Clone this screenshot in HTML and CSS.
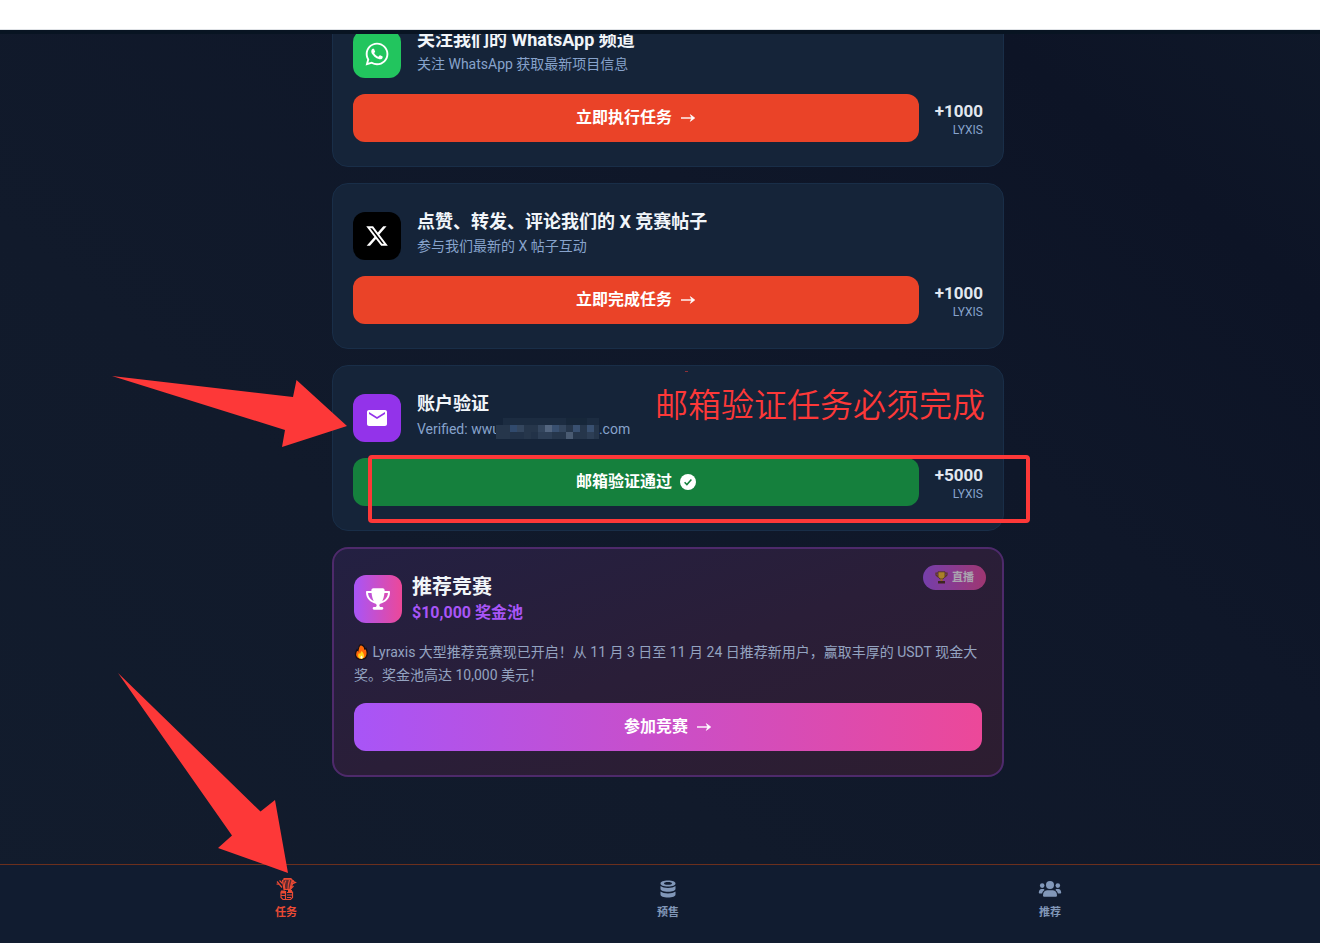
FILE: index.html
```html
<!DOCTYPE html>
<html lang="zh-CN">
<head>
<meta charset="utf-8">
<meta name="viewport" content="width=device-width, initial-scale=1">
<title>Lyraxis</title>
<link rel="stylesheet" href="styles.css">
</head>
<body>
<svg class="defs" aria-hidden="true">
  <symbol id="arrow" viewBox="0 0 14 10"><path d="M0 5h12" stroke="currentColor" stroke-width="1.4" fill="none"/><path d="M9.300 1.600 13.800 5 9.300 8.400 10.800 5z" fill="currentColor" stroke="currentColor" stroke-width=".6"/></symbol>
</svg>
<div class="topbar"></div>
<div class="strip"></div>
<main class="main">
  <div class="list">
    <section class="card">
      <div class="head">
        <span class="icon green"><svg width="26" height="26" viewBox="-32 0 512 512" fill="#fff"><path d="M380.900 97.100C339 55.100 283.200 32 223.900 32c-122.400 0-222 99.600-222 222 0 39.100 10.200 77.300 29.600 111L0 480l117.700-30.900c32.400 17.700 68.900 27 106.100 27h.1c122.300 0 224.100-99.600 224.100-222 0-59.300-25.200-115-67.100-157zm-157 341.600c-33.200 0-65.700-8.900-94-25.700l-6.700-4-69.800 18.300L72 359.200l-4.400-7c-18.500-29.400-28.200-63.300-28.200-98.200 0-101.700 82.800-184.500 184.600-184.500 49.300 0 95.600 19.200 130.400 54.100 34.800 34.900 56.200 81.200 56.100 130.500 0 101.800-84.900 184.600-186.600 184.600zm101.200-138.200c-5.500-2.800-32.800-16.200-37.900-18-5.100-1.900-8.800-2.800-12.500 2.800-3.700 5.600-14.300 18-17.600 21.800-3.200 3.700-6.500 4.200-12 1.400-32.600-16.300-54-29.100-75.500-66-5.700-9.800 5.700-9.100 16.300-30.300 1.800-3.700.9-6.900-.5-9.700-1.400-2.800-12.500-30.100-17.100-41.200-4.500-10.800-9.100-9.300-12.500-9.500-3.200-.2-6.900-.2-10.600-.2-3.700 0-9.700 1.400-14.800 6.900-5.100 5.600-19.400 19-19.400 46.300 0 27.300 19.900 53.700 22.600 57.400 2.800 3.700 39.100 59.700 94.800 83.800 35.200 15.200 49 16.500 66.600 13.900 10.700-1.600 32.800-13.400 37.400-26.400 4.600-13 4.600-24.100 3.200-26.400-1.300-2.500-5-3.900-10.500-6.600z"/></svg></span>
        <div><h2 class="title">关注我们的 WhatsApp 频道</h2><p class="sub">关注 WhatsApp 获取最新项目信息</p></div>
      </div>
      <div class="row">
        <button class="btn">立即执行任务<svg class="arrow"><use href="#arrow"/></svg></button>
        <div class="pts"><strong>+1000</strong><span>LYXIS</span></div>
      </div>
    </section>

    <section class="card">
      <div class="head">
        <span class="icon black"><svg width="24" height="24" viewBox="0 0 24 24" fill="#fff"><path d="M18.244 2.250h3.308l-7.227 8.260 8.502 11.240H16.170l-5.214-6.817L4.990 21.750H1.680l7.730-8.835L1.254 2.250H8.080l4.713 6.231zm-1.161 17.520h1.833L7.084 4.126H5.117z"/></svg></span>
        <div><h2 class="title">点赞、转发、评论我们的 X 竞赛帖子</h2><p class="sub">参与我们最新的 X 帖子互动</p></div>
      </div>
      <div class="row">
        <button class="btn">立即完成任务<svg class="arrow"><use href="#arrow"/></svg></button>
        <div class="pts"><strong>+1000</strong><span>LYXIS</span></div>
      </div>
    </section>

    <section class="card marked">
      <div class="head">
        <span class="icon purple"><svg width="24" height="24" viewBox="0 0 24 24" fill="#fff"><path d="M20 4H4c-1.100 0-2 .9-2 2v12c0 1.100.9 2 2 2h16c1.100 0 2-.9 2-2V6c0-1.100-.9-2-2-2zm0 4l-8 5-8-5V6l8 5 8-5v2z"/></svg></span>
        <div><h2 class="title">账户验证</h2>
          <p class="sub mail">Verified: wwu<svg class="mosaic" viewBox="0 0 103 21" shape-rendering="crispEdges">
            <path fill="#26364b" d="M0 7h103v14H0z"/><path fill="#1c2c41" d="M7 0h63v7H7zM91 0h12v7H91z"/><path fill="#17273a" d="M70 0h21v7H70z"/>
            <path fill="#314a6d" d="M14 7h7v7h-7z"/><path fill="#34465e" d="M21 7h7v7h-7zM42 7h7v7h-7zM63 7h7v7h-7z"/><path fill="#53657f" d="M49 7h7v7h-7z"/><path fill="#395070" d="M56 7h7v7h-7zM77 7h7v7h-7zM91 7h7v7h-7z"/>
            <path fill="#223248" d="M14 14h14v7H14zM35 14h7v7h-7z"/><path fill="#2d3e55" d="M42 14h14v7H42zM91 14h7v7h-7z"/><path fill="#4a5b72" d="M70 14h7v7h-7z"/></svg>.com</p></div>
      </div>
      <div class="row">
        <button class="btn done">邮箱验证通过<svg width="16" height="16" viewBox="0 0 16 16"><circle cx="8" cy="8" r="8" fill="#fff"/><path d="m4.600 8.300 2.300 2.300 4.500-5" fill="none" stroke="#15803d" stroke-width="1.500"/></svg></button>
        <div class="pts"><strong>+5000</strong><span>LYXIS</span></div>
      </div>
      <p class="note">邮箱验证任务必须完成</p>
      <div class="frame"></div>
      <svg class="pointer" viewBox="112 376 235 71"><path d="m112 376 181 21 3.500-17L347 426l-65 21 3-17z" fill="#fd3838"/></svg>
    </section>

    <section class="card contest">
      <span class="badge"><svg width="13" height="13" viewBox="0 0 13 13"><path d="M3 .8h7v5L8 8H5L3 5.800z" fill="#ffc31f" stroke="#4b2a12" stroke-width=".7"/><path d="M3 2H1v2l2 2M10 2h2v2l-2 2" fill="none" stroke="#7a4a12" stroke-width="1.200"/><path d="M5.500 8h2v2h-2z" fill="#e79a10"/><path d="M3 10h7v2.500H3z" fill="#4b2a12"/></svg>直播</span>
      <div class="head">
        <span class="icon fade"><svg width="24" height="22" viewBox="0 0 576 512" fill="#fff"><path d="M400 0H176c-26.500 0-48.100 21.800-47.100 48.200.2 5.300.4 10.600.7 15.800H24C10.700 64 0 74.700 0 88c0 92.600 33.500 157 78.500 200.700 44.300 43.100 98.300 64.800 138.100 75.800 23.400 6.500 39.400 26 39.400 45.600 0 20.900-17 37.900-37.900 37.900H192c-17.700 0-32 14.300-32 32s14.300 32 32 32h192c17.700 0 32-14.300 32-32s-14.300-32-32-32h-26.100c-20.900 0-37.900-17-37.900-37.900 0-19.600 15.900-39.200 39.400-45.600 39.900-11 93.900-32.700 138.200-75.800C542.500 245 576 180.600 576 88c0-13.300-10.700-24-24-24H446.400c.3-5.200.5-10.400.7-15.800C448.100 21.800 426.500 0 400 0zM48.900 112h84.400c9.100 90.100 29.200 150.300 51.900 190.600-24.900-11-50.800-26.500-73.200-48.300-32-31.100-58-76-63-142.300zm415.200 142.300c-22.400 21.800-48.300 37.300-73.200 48.300 22.700-40.300 42.800-100.500 51.900-190.600h84.400c-5.100 66.300-31.100 111.200-63 142.300z"/></svg></span>
        <div><h2 class="title">推荐竞赛</h2><p class="prize">$10,000 奖金池</p></div>
      </div>
      <p class="text"><svg class="fire" viewBox="0 0 14 16"><path d="M6 .6c3 .4 4 2.400 4.400 4.400l1.100-.6c2 4 2 10.600-4.500 11C.7 15.400-.2 10 2.400 5.800l1 .7C3.700 4 4.200 2 6 .6z" fill="#ff6708" stroke="#151016" stroke-width="1.300"/><path d="M7 7c3 2.500 4 7.500 0 7.700S3.200 10.500 4.500 9l1 1z" fill="#ffd21c"/><path d="M7 11.500c1.500 1 1.500 3.200 0 3.200s-1.500-2.200 0-3.200z" fill="#fffbe0"/></svg> Lyraxis 大型推荐竞赛现已开启！从 11 月 3 日至 11 月 24 日推荐新用户，赢取丰厚的 USDT 现金大奖。奖金池高达 10,000 美元！</p>
      <button class="btn fade">参加竞赛<svg class="arrow"><use href="#arrow"/></svg></button>
    </section>
  </div>
</main>
<nav class="nav">
  <div class="tabs">
    <a class="tab active" href="#tasks">
      <svg width="24" height="24" viewBox="0 0 24 24"><g fill="none" stroke="#ea4a34" stroke-width="1.200"><path d="M8.500 3.500 11.500 1.800h5l3 2.200-3 8.500H10z" fill="#5f2a30"/><path d="M12 3.500c-2 3-2 6-1 9M15.500 3c-1 3-1.500 6-1.500 9M18 4l-2 8M3 4.500l5 6M2.500 7l3.500.5M5.500 3.500l3 3M17.500 3.500l4 2-3.500 1.500M19.500 9l-3 3"/><path d="M7 14.500v6l2 2h7.500l2-2v-6"/><path d="M11.500 14v8M7 18.500h4M13 15.500h5.500M13 18h5.500M13 20.500h4"/></g><path d="M7 13.500h4v3H7zM14 13h4v2h-4zM9.500 1h8v1.500h-8z" fill="#ea4a34"/></svg>
      <span>任务</span>
      <svg class="pointer-down" viewBox="118 673 170 200"><path d="m118 673 142.500 138.500L275 800l13 73-70-25 14-12.500z" fill="#fd3838"/></svg>
    </a>
    <a class="tab" href="#presale">
      <svg width="24" height="24" viewBox="0 0 24 24" fill="currentColor"><path fill-rule="evenodd" d="M12 3.500c4.500 0 7.500 1.200 7.500 3s-3 3.100-7.500 3.100-7.500-1.300-7.500-3.100 3-3 7.500-3zm0 1.600c-2.500 0-4 .6-4 1.400s1.500 1.300 4 1.300 4-.5 4-1.300-1.500-1.400-4-1.400z"/><path d="M4.500 9c3 2.600 12 2.600 15 0v2.800c0 1.800-3 3-7.500 3s-7.500-1.200-7.500-3zM4.500 14.500c3 2.600 12 2.600 15 0v3c0 1.800-3 3-7.500 3s-7.500-1.200-7.500-3z"/></svg>
      <span>预售</span>
    </a>
    <a class="tab" href="#refer">
      <svg width="24" height="24" viewBox="0 0 24 24" fill="currentColor"><circle cx="12" cy="8" r="4"/><circle cx="4.200" cy="8.600" r="2.300"/><circle cx="19.800" cy="8.600" r="2.300"/><path d="M9 13.200h6c2.500 0 4 2.200 4 5.200 0 .9-.6 1.400-1.400 1.400H6.400C5.600 19.800 5 19.300 5 18.400c0-3 1.500-5.200 4-5.200zM3.500 12h2.300l.8 1c-1.300 1-2.200 2-2.500 3.600H1.800c-.6 0-1-.4-1-1 0-2 1.200-3.600 2.700-3.600zM20.500 12h-2.300l-.8 1c1.300 1 2.200 2 2.500 3.600h2.300c.6 0 1-.4 1-1 0-2-1.200-3.600-2.700-3.600z"/></svg>
      <span>推荐</span>
    </a>
  </div>
</nav>
</body>
</html>
```
FILE: styles.css
```css
* { box-sizing: border-box; }

body {
  margin: 0;
  height: 100vh;
  display: flex;
  flex-direction: column;
  overflow: hidden;
  font-family: Roboto, "Noto Sans CJK SC", sans-serif;
  color: #f1f5f9;
  background: linear-gradient(40deg, #121c2d 0%, #111a2b 35%, #0f1729 65%, #0d1426 85%, #0f1829 100%);
}

h2, p { margin: 0; }
.defs { position: absolute; width: 0; height: 0; }

.topbar { flex: none; height: 30px; background: #fff; border-bottom: 1px solid #dfe2e6; }
.strip { flex: none; height: 4px; background: #081422; }

.main { flex: 1; min-height: 0; overflow: hidden; padding-left: 16px; }
.list {
  max-width: 672px;
  margin: -33px auto 0;
  display: flex;
  flex-direction: column;
  gap: 16px;
}

.card {
  position: relative;
  padding: 24px 20px;
  border: 1px solid #192e48;
  border-radius: 16px;
  background: #152439;
}
.head { display: flex; align-items: flex-start; gap: 16px; margin-bottom: 16px; }
.icon {
  flex: none;
  width: 48px;
  height: 48px;
  margin-top: 4px;
  border-radius: 12px;
  display: grid;
  place-items: center;
}
.icon.green { background: #22c55e; }
.icon.black { background: #000; }
.icon.purple { background: #9333ea; }
.title { font-size: 18px; line-height: 28px; font-weight: 700; }
.sub { font-size: 14px; line-height: 20px; color: #87a3cc; }
.mail { display: flex; align-items: center; white-space: pre; }
.mosaic { width: 103px; height: 21px; margin-left: -4px; }

.row { display: flex; align-items: center; gap: 16px; }
.btn {
  flex: 1;
  height: 48px;
  padding: 0;
  border: 0;
  border-radius: 12px;
  display: flex;
  align-items: center;
  justify-content: center;
  gap: 8px;
  font: 700 16px/24px Roboto, "Noto Sans CJK SC", sans-serif;
  color: #fff;
  background: #ea4328;
}
.btn.done { background: #15803d; }
.arrow { width: 16px; height: 10px; }
.pts { width: 48px; padding-top: 2px; display: flex; flex-direction: column; align-items: flex-end; }
.pts strong { font-size: 17px; line-height: 22px; color: #e2e8f0; }
.pts span { font-size: 12px; line-height: 16px; color: #87a3cc; }

.note {
  position: absolute;
  top: 13px;
  right: 18px;
  font: 350 33px/48px "Noto Sans CJK SC", sans-serif;
  color: #fd3838;
}
.frame {
  position: absolute;
  top: 89px;
  left: 35px;
  right: -27px;
  height: 68px;
  border: 4px solid #fd3838;
  border-radius: 4px;
}
.marked::after {
  content: "";
  position: absolute;
  top: 5px;
  left: 352px;
  width: 3px;
  height: 1px;
  background: #8c3038;
}
.pointer { position: absolute; top: 10px; left: -221px; width: 235px; height: 71px; }

.contest {
  border: 2px solid #4e2a6b;
  background: linear-gradient(160deg, #232042 0%, #2a1e38 50%, #2d1d30 100%);
}
.contest .head { align-items: center; gap: 10px; }
.contest .icon { margin-top: 0; }
.contest .title { font-size: 20px; }
.fade { background: linear-gradient(90deg, #a855f7, #ec4899); }
.contest .btn { width: 100%; margin-top: 16px; }
.prize { font-size: 16px; line-height: 24px; font-weight: 700; color: #a855f7; }
.text { font-size: 14px; line-height: 23px; color: #94a3c0; }
.fire { width: 15px; height: 16px; vertical-align: -3px; }
.badge {
  position: absolute;
  top: 16px;
  right: 16px;
  display: flex;
  align-items: center;
  gap: 4px;
  padding: 4px 12px;
  border-radius: 13px;
  font-size: 11px;
  line-height: 17px;
  font-weight: 700;
  color: #fff;
  background: linear-gradient(90deg, #a855f7, #ec4899);
  opacity: .6;
}

.nav {
  flex: none;
  height: 79px;
  padding: 12px 0 0 16px;
  border-top: 1px solid #6b2f1d;
  background: #111c30;
}
.tabs { max-width: 1146px; margin: 0 auto; display: flex; }
.tab {
  position: relative;
  flex: 1;
  display: flex;
  flex-direction: column;
  align-items: center;
  gap: 4px;
  font-size: 11px;
  line-height: 16px;
  font-weight: 700;
  text-decoration: none;
  color: #8197b8;
}
.tab.active { color: #ea4a34; }
.pointer-down {
  position: absolute;
  right: calc(50% - 2px);
  bottom: 48px;
  width: 170px;
  height: 200px;
}
```
